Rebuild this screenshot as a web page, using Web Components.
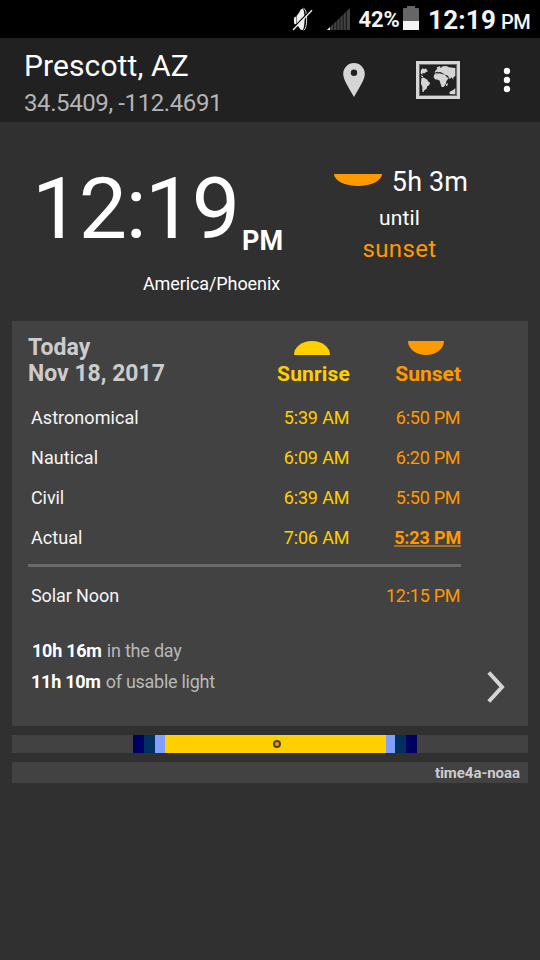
<!DOCTYPE html>
<html lang="en"><head><meta charset="utf-8"><title>Sun times</title>
<style>html,body{margin:0;background:#303030}</style></head>
<body><sun-app></sun-app>
<script>
const define=(name,html)=>customElements.define(name,class extends HTMLElement{
  connectedCallback(){ if(this.shadowRoot)return; this.attachShadow({mode:'open'}).innerHTML=typeof html==='function'?html(this):html; }
});
const a=(e,n,d='')=>e.getAttribute(n)??d;

/* single line of text: size, line height, weight, letter spacing, colour */
define('ui-text',e=>`<style>:host{display:block;white-space:nowrap;flex:none;
 font-size:${a(e,'s','18')}px;line-height:${a(e,'lh','40')}px;font-weight:${a(e,'w','400')};letter-spacing:${a(e,'ls','0')}px;${e.hasAttribute('c')?`color:${a(e,'c')}`:''}}</style><slot></slot>`);

/* half disc: rising (dome) or setting (bowl) */
define('half-sun',e=>{const w=+a(e,'w'),h=+a(e,'h'),up=e.hasAttribute('up');
 return `<style>:host{display:block;flex:none;width:${w}px;height:${h}px;background:${a(e,'c')};border-radius:${up?`${w/2}px ${w/2}px 0 0/${h}px ${h}px 0 0`:`0 0 ${w/2}px ${w/2}px/0 0 ${h}px ${h}px`}}</style>`});

define('status-bar',`<style>:host{display:flex;height:38px;background:#000;color:#f4f4f4;justify-content:flex-start;align-items:flex-start;padding-left:291px;box-sizing:border-box}
svg{display:block;flex:none}.sig{margin:8px 0 0 13px}.pct{margin-left:8.500px;width:42px}.bat{margin:6px 0 0 2px}.clock{margin-left:9.500px;width:73px}</style>
<svg style="margin-top:7px" width="23" height="25" viewBox="0 0 69 75"><g fill="#eee"><path d="M9 32L16 28V52H11Q8 49 9 32Z"/><path d="M17 26L24 17L29 8L36 4Q40 12 41 35Q40 60 36 69L29 68L17 52Z"/></g><path d="M38 4Q47 8 47 36Q47 64 38 70" fill="none" stroke="#ddd" stroke-width="3"/><path d="M7 63L60 8" stroke="#000" stroke-width="4"/><path d="M6 69L63 10" stroke="#eee" stroke-width="4"/></svg>
<svg class="sig" width="23" height="22" viewBox="0 0 69 66"><path d="M0 66L69 0V66Z" fill="#414141"/><path d="M0 66L10 56V66Z" fill="#eee"/><path d="M10.500 0V66M20 0V66M29.500 0V66M39 0V66M48.500 0V66M58 0V66" stroke="#000" stroke-width="2"/></svg>
<ui-text class="pct" s="22" lh="39" w="700" ls="-.12">42%</ui-text>
<svg class="bat" width="16" height="24" viewBox="0 0 16 24"><path d="M0 3Q0 2 1 2H4V0H12V2H15Q16 2 16 3V15H0Z" fill="#666"/><path d="M0 15H16V24H0Z" fill="#f4f4f4"/></svg>
<ui-text class="clock" s="26" lh="40" w="700" ls=".23">12:19</ui-text><ui-text s="20" lh="44" w="500" ls="-.5">PM</ui-text>`);

define('app-header',`<style>:host{display:flex;height:84px;background:#212121;padding-left:24px;box-sizing:border-box;align-items:flex-start}
.place{width:319px;padding-top:8px}svg{display:block;flex:none}.map{margin:23px 0 0 51px}.more{margin:29px 0 0 43px}</style>
<div class="place"><ui-text s="30" lh="39" ls=".1" c="#fff">Prescott, AZ</ui-text><ui-text s="24" lh="36" ls="-.4" c="#b4b4b4">34.5409, -112.4691</ui-text></div>
<svg style="margin-top:25px" width="22" height="34" viewBox="0 0 22 34"><path fill-rule="evenodd" fill="#d5d5d5" d="M11 0A10.800 10.800 0 0 1 21.800 10.800C21.800 17 16 25 11 34C6 25 .2 17 .2 10.800A10.800 10.800 0 0 1 11 0ZM11 6.500A3.200 3.200 0 1 0 11 12.900A3.200 3.200 0 1 0 11 6.500Z"/></svg>
<svg class="map" width="44" height="38" viewBox="258 33 132 114"><rect x="262.500" y="37.500" width="123" height="105" fill="#212121" stroke="#d5d5d5" stroke-width="9"/><rect x="268.500" y="43.500" width="111" height="93" fill="none" stroke="#696969" stroke-width="3"/>
<g fill="#d5d5d5"><path d="M273 60L278 55L283 58L287 55L294 64L288 66L284 70L278 69L277 75L272 70Z"/><path d="M274 76L279 79L280 84L274 80Z"/><path d="M274 85L282 83L292 89L294 94L300 98L298 105L292 109L289 117L283 121L280 127L277 125L277 110L273 102Z"/><path d="M312 75L317 69L326 68L336 72L345 73L351 82L356 84L349 94L347 103L341 111H335L332 103L329 92L324 89L315 88L311 82Z"/><path d="M314 67L317 61L322 57L320 52L330 49L332 54L338 49L349 48L357 52L376 54V77L369 84L371 90L364 82L359 88L354 77L345 74L337 70L333 67L326 66L320 65L315 68Z"/><path d="M348 103L354 98L352 107L348 109Z"/><path d="M358 130L359 125L368 121L376 115V133H362Z"/></g><path d="M317 72L331 69L343 73M351 80L345 75" stroke="#212121" stroke-width="1.500" fill="none"/></svg>
<svg class="more" width="8" height="26" viewBox="0 0 8 26" fill="#fff"><circle cx="4" cy="4" r="3.200"/><circle cx="4" cy="13" r="3.200"/><circle cx="4" cy="22" r="3.200"/></svg>`);

define('clock-panel',`<style>:host{display:flex;height:199px;color:#fff;box-sizing:border-box}
.now{width:284px;padding-top:37px;box-sizing:border-box}.time{display:flex;padding-left:32px;height:106px}.time ui-text:first-child{width:210px}
.zone{display:flex;justify-content:flex-end;padding-right:4px}
.next{width:231px;display:flex;flex-direction:column;align-items:center;padding:41px 0 0}.row{display:flex;gap:10px;padding-left:3px}half-sun{margin-top:11px}</style>
<div class="now"><div class="time"><ui-text s="86" lh="100" ls="-1.500">12:19</ui-text><ui-text s="27" lh="164" w="700" ls="0">PM</ui-text></div>
<div class="zone"><ui-text s="18" lh="37" ls="-.1">America/Phoenix</ui-text></div></div>
<div class="next"><div class="row"><half-sun w="48" h="12" c="#ff9900"></half-sun><ui-text s="27" lh="38" ls=".15">5h 3m</ui-text></div>
<ui-text s="21" lh="34" ls=".1">until</ui-text><ui-text s="24" lh="29" ls=".4" c="#ff9900">sunset</ui-text></div>`);

define('sun-row',e=>`<style>:host{display:grid;grid-template-columns:180px 142px 111px;height:40px}.r{justify-self:end}</style>
<ui-text style="padding-left:3px" ls="${a(e,'ls','.05')}" c="#f5f5f5">${a(e,'label')}</ui-text>
<ui-text class="r" style="padding-right:.7px" ls="-.15" c="#ffcf00">${a(e,'rise')}</ui-text>
<ui-text class="r" w="${a(e,'w','400')}" ls="${a(e,'sls','-.25')}" c="#ff9900" ${e.hasAttribute('active')?'style="background:linear-gradient(#a9701f,#a9701f) 0 27px/100% 2px no-repeat"':'style="padding-right:.7px"'}>${a(e,'set')}</ui-text>`);

define('sun-card',`<style>:host{display:block;margin:0 12px;height:405px;background:#424242;box-sizing:border-box;padding-left:16px;position:relative}
.head{display:grid;grid-template-columns:180px 142px 111px;height:77px;padding-top:13px;box-sizing:border-box}
.col{display:flex;flex-direction:column;justify-self:end;align-items:center;padding-top:7px}.col half-sun{margin-right:4px}
.line{width:433px;height:3px;background:#696969;margin:6px 0 9px}
.sum{display:flex;gap:5px;height:31px;color:#b8b8b8}.sums{padding:19px 0 0 4px}svg{position:absolute;right:23px;top:349px}</style>
<div class="head"><div><ui-text s="23" lh="27" w="700" ls=".1" c="#ccc">Today</ui-text><ui-text s="23" lh="26" w="700" ls="0" c="#ccc">Nov 18, 2017</ui-text></div>
<div class="col"><half-sun up w="36" h="14" c="#ffcf00"></half-sun><ui-text s="21" lh="38" w="700" ls=".15" c="#ffcf00">Sunrise</ui-text></div>
<div class="col"><half-sun w="36" h="14" c="#ff9900"></half-sun><ui-text s="21" lh="38" w="700" c="#ff9900">Sunset</ui-text></div></div>
<sun-row label="Astronomical" rise="5:39 AM" set="6:50 PM"></sun-row><sun-row label="Nautical" rise="6:09 AM" set="6:20 PM" ls=".1"></sun-row><sun-row label="Civil" rise="6:39 AM" set="5:50 PM" ls="-.1"></sun-row><sun-row label="Actual" rise="7:06 AM" set="5:23 PM" w="700" sls="-.15" active></sun-row>
<div class="line"></div><sun-row label="Solar Noon" rise="" set="12:15 PM" ls="-.1" sls="-.25"></sun-row>
<div class="sums"><div class="sum"><ui-text w="700" lh="31" ls="-.25" c="#fff">10h 16m</ui-text><ui-text lh="31" ls="-.2">in the day</ui-text></div>
<div class="sum"><ui-text style="margin-left:-1px" w="700" lh="31" ls="-.25" c="#fff">11h 10m</ui-text><ui-text lh="31" ls="-.27">of usable light</ui-text></div></div>
<svg width="18" height="34" viewBox="0 0 18 34"><path d="M1.800 2.500L15 17L1.800 31.500" fill="none" stroke="#d5d5d5" stroke-width="4"/></svg>`);

define('day-bar',`<style>:host{display:grid;grid-template-columns:11px 11px 10px 221px 9px 11px 11px;margin:9px 12px;height:18px;background:#424242;padding-left:121px;box-sizing:border-box}
.n{background:#000060}.u{background:#003060}.c{background:#80a0ff}.d{background:#ffcf00;position:relative}
.d::after{content:"";position:absolute;left:108px;top:5px;width:8px;height:8px;box-sizing:border-box;border:2px solid #4a463c;border-radius:50%;background:#ff9900}</style>
<i class="n"></i><i class="u"></i><i class="c"></i><i class="d"></i><i class="c"></i><i class="u"></i><i class="n"></i>`);

define('source-bar',`<style>:host{display:flex;justify-content:flex-end;margin:0 12px;height:21px;background:#424242;padding-right:8px}</style><ui-text s="15" lh="22" w="700" ls="-.05" c="#ccc">time4a-noaa</ui-text>`);

define('sun-app',`<style>:host{display:block;width:540px;height:960px;overflow:hidden;background:#303030;font-family:Roboto,sans-serif}</style>
<status-bar></status-bar><app-header></app-header><clock-panel></clock-panel><sun-card></sun-card><day-bar></day-bar><source-bar></source-bar>`);
</script></body></html>
